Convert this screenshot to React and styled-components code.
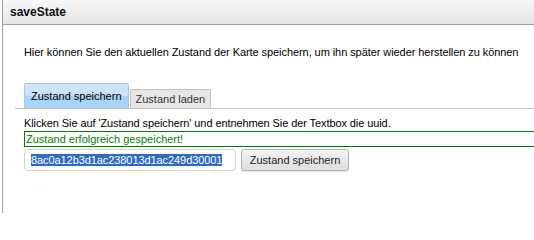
import React from 'react';
import styled, { createGlobalStyle } from 'styled-components';

const GlobalStyle = createGlobalStyle`
    html, body {
        margin: 0;
        padding: 0;
        background: #fff;
    }
    body {
        font-family: "Liberation Sans", Arial, sans-serif;
        font-size: 11px;
        color: #000;
    }
`;

const App = () => {
    return (
        <>
            <GlobalStyle />
            <Window>
                <TitleBar>saveState</TitleBar>
                <Content>
                    <Intro>
                        Hier können Sie den aktuellen Zustand der Karte speichern, um ihn später wieder herstellen zu können
                    </Intro>
                    <TabBar>
                        <Tab active>Zustand speichern</Tab>
                        <Tab>Zustand laden</Tab>
                    </TabBar>
                    <Hint>Klicken Sie auf 'Zustand speichern' und entnehmen Sie der Textbox die uuid.</Hint>
                    <SuccessBox>Zustand erfolgreich gespeichert!</SuccessBox>
                    <InputRow>
                        <UuidField>
                            <Selected>8ac0a12b3d1ac238013d1ac249d30001</Selected>
                        </UuidField>
                        <Button type="button">Zustand speichern</Button>
                    </InputRow>
                </Content>
            </Window>
        </>
    );
};

export default App;

const Window = styled.div`
    margin-left: 2px;
    border-left: 1px solid #a3a3a3;
    height: 213px;
    overflow: hidden;
`;

const TitleBar = styled.div`
    height: 24px;
    line-height: 24px;
    padding-left: 7px;
    background: linear-gradient(#f8f8f8, #e5e5e5);
    border-bottom: 1px solid #9e9e9e;
    font-size: 12px;
    font-weight: bold;
    color: #111;
`;

const Content = styled.div`
    padding-left: 21px;
`;

const Intro = styled.div`
    margin-top: 21px;
    line-height: 13px;
    white-space: nowrap;
    letter-spacing: -0.07px;
`;

const TabBar = styled.div`
    display: flex;
    align-items: flex-end;
    gap: 1px;
    margin: 24px 0 0 -9px;
    padding-left: 9px;
    border-bottom: 1px solid #c4c4c4;
`;

const Tab = styled.div`
    height: ${p => (p.active ? 18 : 15)}px;
    padding: ${p => (p.active ? '6px 6px 0' : '3px 5px 0')};
    line-height: 13px;
    border: 1px solid ${p => (p.active ? '#a6c9e8' : '#c2c2c2')};
    border-bottom: none;
    border-radius: 2px 2px 0 0;
    background: ${p => (p.active
        ? 'linear-gradient(#cfe6f9 0%, #c6e1f7 50%, #a9d3f8 50%, #a9d3f8 100%)'
        : '#e6e6e6')};
    color: ${p => (p.active ? '#000' : '#333')};
`;

const Hint = styled.div`
    margin-top: 8px;
    line-height: 13px;
    white-space: nowrap;
    letter-spacing: -0.09px;
`;

const SuccessBox = styled.div`
    margin: 1px -30px 0 0;
    border: 1px solid #008000;
    line-height: 14px;
    padding-left: 1px;
    color: #008000;
`;

const InputRow = styled.div`
    display: flex;
    align-items: center;
    gap: 5px;
    margin-top: 2px;
`;

const UuidField = styled.div`
    box-sizing: border-box;
    width: 212px;
    height: 22px;
    padding-left: 6px;
    display: flex;
    align-items: center;
    border: 1px solid #d6d6d6;
    border-radius: 4px;
    background: #fff;
`;

const Selected = styled.span`
    background: #316ac5;
    color: #fff;
    line-height: 12px;
    font-size: 11px;
    letter-spacing: -0.08px;
`;

const Button = styled.button`
    box-sizing: border-box;
    width: 108px;
    height: 22px;
    padding: 0;
    font-family: "Liberation Sans", Arial, sans-serif;
    font-size: 11px;
    color: #222;
    border: 1px solid #b4b4b4;
    border-radius: 3px;
    background: linear-gradient(#f4f4f4, #dedede);
    box-shadow: 0 1px 1px rgba(0, 0, 0, 0.12);
`;
